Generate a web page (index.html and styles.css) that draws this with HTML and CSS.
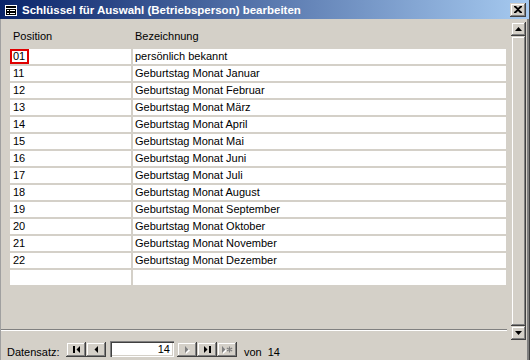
FILE: index.html
```html
<!DOCTYPE html>
<html lang="de">
<head>
<meta charset="utf-8">
<title>Schlüssel für Auswahl (Betriebsperson) bearbeiten</title>
<link rel="stylesheet" href="styles.css">
</head>
<body>
<div class="window">
  <div class="titlebar">
    <svg class="ticon" width="12" height="11" viewBox="0 0 12 11">
      <rect x="0" y="0" width="12" height="11" fill="#fff"/>
      <rect x="1" y="1" width="10" height="2" fill="#000"/>
      <rect x="1" y="4" width="10" height="6" fill="#000"/>
      <rect x="2" y="5" width="2" height="1" fill="#fff"/>
      <rect x="5" y="5" width="5" height="1" fill="#fff"/>
      <rect x="2" y="8" width="2" height="1" fill="#fff"/>
      <rect x="5" y="8" width="5" height="1" fill="#fff"/>
    </svg>
    <span class="title">Schlüssel für Auswahl (Betriebsperson) bearbeiten</span>
    <div class="close raised">
      <svg width="8" height="7" viewBox="0 0 8 7"><path d="M0 0h2l2 2 2-2h2v1l-3 2.5 3 2.5v1h-2l-2-2-2 2h-2v-1l3-2.5-3-2.5z" fill="#000"/></svg>
    </div>
  </div>
  <div class="client">
    <div class="main">
      <div class="form">
        <div class="header">
          <span class="hpos">Position</span>
          <span class="hbez">Bezeichnung</span>
        </div>
        <div class="grid">
          <div class="row"><div class="c1"><span class="focus">01</span></div><div class="c2">persönlich bekannt</div></div>
          <div class="row"><div class="c1">11</div><div class="c2">Geburtstag Monat Januar</div></div>
          <div class="row"><div class="c1">12</div><div class="c2">Geburtstag Monat Februar</div></div>
          <div class="row"><div class="c1">13</div><div class="c2">Geburtstag Monat März</div></div>
          <div class="row"><div class="c1">14</div><div class="c2">Geburtstag Monat April</div></div>
          <div class="row"><div class="c1">15</div><div class="c2">Geburtstag Monat Mai</div></div>
          <div class="row"><div class="c1">16</div><div class="c2">Geburtstag Monat Juni</div></div>
          <div class="row"><div class="c1">17</div><div class="c2">Geburtstag Monat Juli</div></div>
          <div class="row"><div class="c1">18</div><div class="c2">Geburtstag Monat August</div></div>
          <div class="row"><div class="c1">19</div><div class="c2">Geburtstag Monat September</div></div>
          <div class="row"><div class="c1">20</div><div class="c2">Geburtstag Monat Oktober</div></div>
          <div class="row"><div class="c1">21</div><div class="c2">Geburtstag Monat November</div></div>
          <div class="row"><div class="c1">22</div><div class="c2">Geburtstag Monat Dezember</div></div>
          <div class="row"><div class="c1"></div><div class="c2"></div></div>
        </div>
        <div class="sep"></div>
      </div>
      <div class="vscroll">
        <div class="sbtn raised">
          <svg width="7" height="4" viewBox="0 0 7 4"><path d="M3.5 0L7 4H0z" fill="#000"/></svg>
        </div>
        <div class="thumb raised"></div>
        <div class="sbtn raised">
          <svg width="7" height="4" viewBox="0 0 7 4"><path d="M0 0h7L3.5 4z" fill="#000"/></svg>
        </div>
      </div>
    </div>
    <div class="nav">
      <span class="navlabel">Datensatz:</span>
      <div class="nbtns first">
        <div class="nbtn raised">
          <svg width="7" height="7" viewBox="0 0 7 7"><rect x="0" y="0" width="2" height="7" fill="#000"/><path d="M7 0v7L3.5 3.5z" fill="#000"/></svg>
        </div>
        <div class="nbtn raised">
          <svg width="4" height="7" viewBox="0 0 4 7"><path d="M4 0v7L0.5 3.5z" fill="#000"/></svg>
        </div>
      </div>
      <div class="recbox">14</div>
      <div class="nbtns">
        <div class="nbtn raised">
          <svg width="5" height="8" viewBox="0 0 5 8"><path d="M1 1v7l4-3.5z" fill="#fff"/><path d="M0 0v7l3.5-3.5z" fill="#808080"/></svg>
        </div>
        <div class="nbtn raised">
          <svg width="7" height="7" viewBox="0 0 7 7"><path d="M0 0v7l3.5-3.5z" fill="#000"/><rect x="5" y="0" width="2" height="7" fill="#000"/></svg>
        </div>
        <div class="nbtn raised">
          <svg width="11" height="8" viewBox="0 0 11 8"><path d="M1 1v7l4-3.5z" fill="#fff"/><path d="M0 0v7l3.5-3.5z" fill="#808080"/><path d="M7.5 0.5v6M4.8 2l5.4 3M4.8 5l5.4-3" stroke="#808080" stroke-width="1.2" fill="none"/></svg>
        </div>
      </div>
      <span class="von">von</span>
      <span class="total">14</span>
    </div>
  </div>
</div>
</body>
</html>
```

FILE: styles.css
```css
html, body {
  margin: 0;
  padding: 0;
}
body {
  width: 530px;
  height: 360px;
  overflow: hidden;
  background: #D4D0C8;
  font-family: "Liberation Sans", Arial, sans-serif;
  font-size: 11px;
  color: #000;
}
.window {
  width: 530px;
  height: 360px;
  box-sizing: border-box;
  display: flex;
  flex-direction: column;
  border-right: 1px solid #404040;
  box-shadow: inset -2px 0 #808080;
}
.raised {
  background: #D4D0C8;
  box-sizing: border-box;
  box-shadow: inset -1px -1px #404040, inset 1px 1px #D4D0C8, inset -2px -2px #808080, inset 2px 2px #fff;
}
.titlebar {
  height: 19px;
  width: 529px;
  flex: none;
  display: flex;
  align-items: center;
  background: linear-gradient(to right, #0A246A, #A6CAF0);
  box-sizing: border-box;
  padding-left: 5px;
}
.ticon {
  display: block;
  flex: none;
  margin-top: 1px;
}
.title {
  margin-left: 5px;
  color: #fff;
  font-weight: bold;
  font-size: 11.5px;
  white-space: nowrap;
  flex: 1;
}
.close {
  width: 16px;
  height: 14px;
  margin-right: 3px;
  display: flex;
  align-items: center;
  justify-content: center;
  flex: none;
}
.close svg {
  display: block;
  margin-top: -1px;
}
.client {
  flex: 1;
  display: flex;
  flex-direction: column;
  border-left: 1px solid #a0a0a0;
  margin-right: 2px;
  padding-top: 2px;
}
.main {
  height: 320px;
  display: flex;
  flex: none;
}
.form {
  flex: 1;
  display: flex;
  flex-direction: column;
}
.header {
  height: 28px;
  box-sizing: border-box;
  padding-top: 9px;
  line-height: 13px;
  display: flex;
}
.hpos {
  margin-left: 12px;
  width: 122px;
}
.grid {
  margin-left: 9px;
  width: 496px;
  display: flex;
  flex-direction: column;
  gap: 2px;
}
.row {
  display: flex;
  gap: 2px;
  height: 15px;
}
.c1, .c2 {
  background: #fff;
  line-height: 15px;
  white-space: nowrap;
  overflow: hidden;
  box-sizing: border-box;
}
.c1 {
  width: 121px;
  padding-left: 3px;
}
.c2 {
  width: 373px;
  padding-left: 2px;
}
.focus {
  display: inline-block;
  box-sizing: border-box;
  height: 15px;
  line-height: 11px;
  margin-left: -3px;
  padding: 0 2px 0 1px;
  border: 2px solid #e00000;
  vertical-align: top;
}
.sep {
  margin-top: auto;
  margin-bottom: 10px;
  height: 2px;
  box-sizing: border-box;
  border-top: 1px solid #808080;
  border-bottom: 1px solid #fff;
  width: 506px;
}
.vscroll {
  width: 15px;
  flex: none;
  display: flex;
  flex-direction: column;
  padding-top: 1px;
  padding-bottom: 1px;
  margin-right: 1px;
}
.sbtn {
  height: 14px;
  flex: none;
  display: flex;
  align-items: center;
  justify-content: center;
}
.sbtn svg {
  display: block;
}
.thumb {
  flex: 1;
}
.nav {
  flex: 1;
  display: flex;
  align-items: flex-start;
  padding-left: 6px;
}
.navlabel {
  margin-top: 5px;
  line-height: 13px;
  width: 59px;
}
.nbtns {
  display: flex;
  margin-top: 1px;
}
.nbtn {
  width: 20px;
  height: 15px;
  display: flex;
  align-items: center;
  justify-content: center;
}
.nbtn svg {
  display: block;
}
.recbox {
  margin-left: 4px;
  margin-right: 3px;
  width: 64px;
  height: 16px;
  box-sizing: border-box;
  background: #fff;
  box-shadow: inset 1px 1px #808080, inset 2px 2px #404040, inset -1px -1px #fff, inset -2px -2px #D4D0C8;
  text-align: right;
  padding-right: 4px;
  line-height: 17px;
}
.von {
  margin-left: 7px;
  margin-top: 5px;
  line-height: 13px;
}
.total {
  margin-left: 6px;
  margin-top: 5px;
  line-height: 13px;
}
```
